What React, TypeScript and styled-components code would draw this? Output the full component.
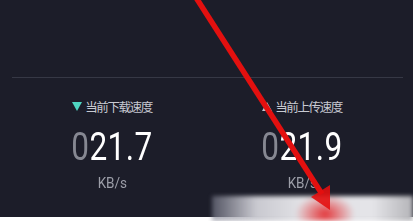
import React from 'react';
import styled, { createGlobalStyle } from 'styled-components';

const GlobalStyle = createGlobalStyle`
  html, body {
    margin: 0;
    padding: 0;
    background: #ffffff;
  }
`;

const Screen = styled.div`
  position: relative;
  width: 413px;
  height: 221px;
  overflow: hidden;
  background: #ffffff;
  font-family: "Noto Sans CJK SC", "Noto Sans", sans-serif;
`;

const Panel = styled.div`
  height: 217px;
  background: #1c1d29;
  display: flex;
  flex-direction: column;
`;

const TopArea = styled.div`
  height: 77px;
`;

const Divider = styled.div`
  height: 1px;
  margin: 0 10px 0 12px;
  background: #363845;
`;

const StatsRow = styled.div`
  display: grid;
  grid-template-columns: 190px 190px;
  padding: 21px 17px 0;
`;

const Stat = styled.div`
  display: flex;
  flex-direction: column;
  align-items: center;
`;

const Label = styled.div`
  display: flex;
  align-items: center;
  gap: 3px;
  height: 15px;
  font-size: 12.5px;
  color: #c8cad2;
  letter-spacing: -1.4px;
  white-space: nowrap;
`;

const Value = styled.div`
  margin-top: 13px;
  height: 40px;
  line-height: 40px;
  font-family: Roboto, "Liberation Sans", sans-serif;
  font-size: 38px;
  color: #ffffff;
  transform: scaleX(0.83);
  letter-spacing: 0.5px;
`;

const Lead = styled.span`
  color: #868892;
`;

const Unit = styled.div`
  margin-top: 8px;
  font-family: Roboto, "Liberation Sans", sans-serif;
  font-size: 15px;
  line-height: 16px;
  color: #9c9ea8;
  transform: scaleX(0.9);
`;

const Blur = styled.div`
  position: absolute;
  left: 212px;
  top: 196px;
  width: 201px;
  height: 25px;
  background:
    radial-gradient(ellipse 30px 20px at 113px 18px, rgba(228, 36, 40, 0.9), rgba(228, 36, 40, 0) 100%),
    linear-gradient(to right, rgba(120, 122, 138, 0.6) 0%, #c9c9d0 22%, #e2e2e6 45%, #e4e4e8 80%, #b4b4b8 100%);
  filter: blur(2px);
`;

const Fade = styled.div`
  position: absolute;
  left: 205px;
  top: 192px;
  width: 208px;
  height: 8px;
  background: linear-gradient(to bottom, #1c1d29, rgba(28, 29, 41, 0));
`;

const Arrow = styled.svg`
  position: absolute;
  left: 0;
  top: 0;
  pointer-events: none;
`;

function DownIcon() {
  return (
    <svg width="10" height="9" viewBox="0 0 10 9">
      <polygon points="0,0 10,0 5,9" fill="#4fd6c2" />
    </svg>
  );
}

function UpIcon() {
  return (
    <svg width="10" height="9" viewBox="0 0 10 9">
      <polygon points="5,0 10,9 0,9" fill="#c4c6cf" />
    </svg>
  );
}

interface SpeedProps {
  icon: React.ReactNode;
  label: string;
  value: string;
}

function Speed({ icon, label, value }: SpeedProps) {
  return (
    <Stat>
      <Label>
        {icon}
        <span>{label}</span>
      </Label>
      <Value>
        <Lead>0</Lead>
        {value}
      </Value>
      <Unit>KB/s</Unit>
    </Stat>
  );
}

export default function App() {
  return (
    <Screen>
      <GlobalStyle />
      <Panel>
        <TopArea />
        <Divider />
        <StatsRow>
          <Speed icon={<DownIcon />} label="当前下载速度" value="21.7" />
          <Speed icon={<UpIcon />} label="当前上传速度" value="21.9" />
        </StatsRow>
      </Panel>
      <Fade />
      <Blur />
      <Arrow width="413" height="221" viewBox="0 0 413 221">
        <line x1="195" y1="-4" x2="322" y2="194" stroke="#e3100f" strokeWidth="5.5" />
        <polygon points="330,210 311,197 330,185" fill="#e3100f" opacity="0.9" />
      </Arrow>
    </Screen>
  );
}
